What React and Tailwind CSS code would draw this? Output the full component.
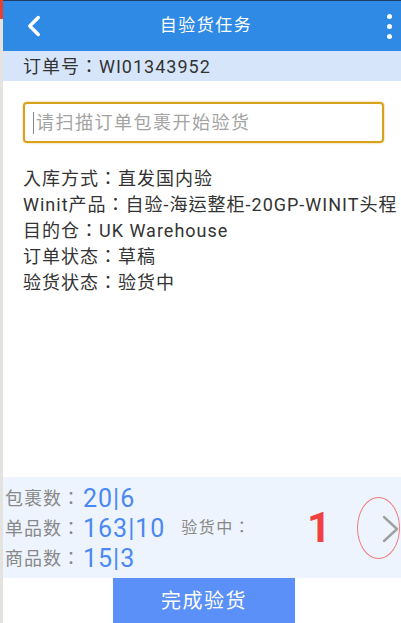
import { ChevronLeft } from 'lucide-react';

const info = [
  { label: '入库方式：', value: '直发国内验' },
  { label: 'Winit产品：', value: '自验-海运整柜-20GP-WINIT头程' },
  { label: '目的仓：', value: 'UK Warehouse' },
  { label: '订单状态：', value: '草稿' },
  { label: '验货状态：', value: '验货中' },
];

const counts = [
  { label: '包裹数：', value: '20|6' },
  { label: '单品数：', value: '163|10' },
  { label: '商品数：', value: '15|3' },
];

const App = () => {
  return (
    <div
      className="flex h-[623px] w-[401px] overflow-hidden bg-white"
      style={{ fontFamily: "Roboto, 'Noto Sans CJK TC', sans-serif" }}
    >
      {/* left edge strip */}
      <div className="flex w-[3px] shrink-0 flex-col bg-[#e4e3df]">
        <div className="h-[19px] bg-[#e8402f]" />
      </div>

      <div className="flex min-w-0 flex-1 flex-col">
        {/* Header */}
        <div className="h-[1px] bg-[#1d3c66]" />
        <header className="flex h-[50px] items-center justify-between bg-[#2f8ae5] pl-[14px] pr-[6px] text-white">
          <ChevronLeft className="h-[34px] w-[34px]" strokeWidth={2.4} />
          <h1 className="text-[17px] tracking-[1.5px]">自验货任务</h1>
          <div className="flex w-[34px] flex-col items-end gap-[5px] pr-[3px]">
            <span className="h-[5px] w-[5px] rounded-full bg-white" />
            <span className="h-[5px] w-[5px] rounded-full bg-white" />
            <span className="h-[5px] w-[5px] rounded-full bg-white" />
          </div>
        </header>

        {/* Order number */}
        <div className="flex h-[30px] items-center bg-[#d7e5fb] pl-[20px] text-[18px] tracking-[1px] text-[#333]">
          订单号：WI01343952
        </div>

        {/* Content */}
        <div className="flex-1 overflow-hidden pl-[20px] pr-[17px] pt-[21px]">
          <div className="flex h-[41px] items-center rounded-[4px] border-2 border-[#d9a21d] pl-[8px] shadow-[0_0_2px_#e0b44a]">
            <span className="mr-[2px] h-[22px] w-px bg-[#888]" />
            <span className="text-[18px] tracking-[1.5px] text-[#a3a3a3]">请扫描订单包裹开始验货</span>
          </div>

          <div className="mt-[23px] flex flex-col text-[18px] leading-[26px] tracking-[1px] text-[#333]">
            {info.map((row) => (
              <div key={row.label} className="whitespace-nowrap">
                {row.label}
                {row.value}
              </div>
            ))}
          </div>
        </div>

        {/* Counts panel */}
        <div className="flex h-[101px] items-center bg-[#eef4fe]">
          <div className="flex flex-col pl-[2px] pt-[2px]">
            {counts.map((c) => (
              <div key={c.label} className="flex h-[30px] items-center">
                <span className="text-[18px] tracking-[1px] text-[#888]">{c.label}</span>
                <span className="ml-[2px] text-[25px] tracking-[1px] text-[#4a88f2]">{c.value}</span>
              </div>
            ))}
          </div>
          <span className="ml-[16px] text-[16px] tracking-[1.5px] text-[#888]">验货中：</span>
          <span className="ml-auto mr-[26px] text-[42px] font-bold text-[#f04040]">1</span>
          <div className="relative mr-[1px] h-[62px] w-[43px] shrink-0 rounded-[50%] border border-[#f07b7b]">
            <svg
              className="absolute left-[24px] top-[17px]"
              width="18"
              height="28"
              viewBox="0 0 18 28"
              fill="none"
              stroke="#a0a0a0"
              strokeWidth="2.4"
              strokeLinecap="round"
              strokeLinejoin="round"
            >
              <polyline points="2,2 15,14 2,26" />
            </svg>
          </div>
        </div>

        {/* Finish button */}
        <div className="flex h-[45px] justify-center">
          <button className="ml-[4px] w-[182px] bg-[#5a90f7] text-[20px] tracking-[1.5px] text-white">完成验货</button>
        </div>
      </div>
    </div>
  );
};

export default App;
